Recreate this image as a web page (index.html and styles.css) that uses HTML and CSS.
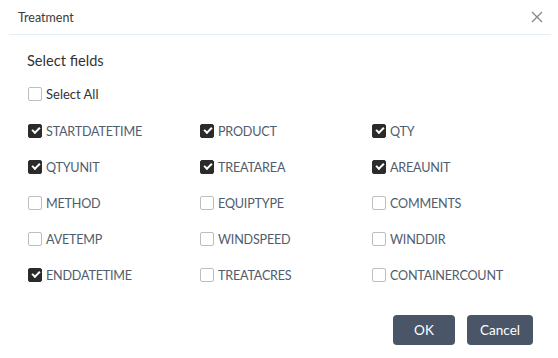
FILE: index.html
```html
<!DOCTYPE html>
<html lang="en">
<head>
  <meta charset="UTF-8" />
  <title>Treatment</title>
  <link rel="stylesheet" href="styles.css">
</head>
<body>
  <div class="dialog">
    <div class="dialog-header">
      <span class="dialog-title">Treatment</span>
      <button class="close-btn" aria-label="Close">
        <svg width="12" height="12" viewBox="0 0 12 12"><path d="M1 1L11 11M11 1L1 11" stroke="#8a8a8a" stroke-width="1.4" fill="none"/></svg>
      </button>
    </div>
    <div class="dialog-body">
      <div class="section-title">Select fields</div>
      <label class="field select-all"><span class="box"></span>Select All</label>
      <div class="field-grid">
        <label class="field"><span class="box checked"></span>STARTDATETIME</label>
        <label class="field"><span class="box checked"></span>PRODUCT</label>
        <label class="field"><span class="box checked"></span>QTY</label>
        <label class="field"><span class="box checked"></span>QTYUNIT</label>
        <label class="field"><span class="box checked"></span>TREATAREA</label>
        <label class="field"><span class="box checked"></span>AREAUNIT</label>
        <label class="field"><span class="box"></span>METHOD</label>
        <label class="field"><span class="box"></span>EQUIPTYPE</label>
        <label class="field"><span class="box"></span>COMMENTS</label>
        <label class="field"><span class="box"></span>AVETEMP</label>
        <label class="field"><span class="box"></span>WINDSPEED</label>
        <label class="field"><span class="box"></span>WINDDIR</label>
        <label class="field"><span class="box checked"></span>ENDDATETIME</label>
        <label class="field"><span class="box"></span>TREATACRES</label>
        <label class="field"><span class="box"></span>CONTAINERCOUNT</label>
      </div>
    </div>
    <div class="dialog-footer">
      <button class="btn">OK</button>
      <button class="btn">Cancel</button>
    </div>
  </div>
</body>
</html>
```

FILE: styles.css
```css
body {
  margin: 0;
  background: #fff;
  font-family: Lato, "Open Sans", sans-serif;
  color: #333;
}
.dialog {
  width: 558px;
  height: 358px;
  box-sizing: border-box;
}
.dialog-header {
  height: 34px;
  margin: 0 7px 0 9px;
  padding: 0 9px 0 9px;
  border-bottom: 1px solid #e4edf6;
  display: flex;
  align-items: center;
  justify-content: space-between;
}
.dialog-title {
  font-size: 12.5px;
  color: #3a3a3a;
}
.close-btn {
  background: none;
  border: none;
  padding: 0;
  width: 12px;
  height: 12px;
  margin-right: -1px;
  cursor: pointer;
  display: flex;
}
.dialog-body {
  padding: 16px 0 0 28px;
}
.section-title {
  font-size: 14.6px;
  line-height: 20px;
  color: #333;
  margin-left: -1px;
  margin-bottom: 5px;
}
.field {
  display: flex;
  align-items: center;
  height: 36px;
  font-size: 12.6px;
  letter-spacing: -0.2px;
  color: #515c6d;
  gap: 4px;
}
.select-all {
  font-size: 13px;
  letter-spacing: 0;
  color: #333;
}
.field-grid {
  display: grid;
  grid-template-columns: 172px 172px 172px;
  padding-top: 1px;
}
.box {
  width: 12px;
  height: 12px;
  border: 1px solid #bdbdbd;
  border-radius: 2px;
  background: #fff;
  position: relative;
  flex: none;
}
.box.checked {
  background: #2b2b2b;
  border-color: #2b2b2b;
}
.box.checked::after {
  content: "";
  position: absolute;
  left: 3px;
  top: 2px;
  width: 6px;
  height: 3px;
  border-left: 2px solid #fff;
  border-bottom: 2px solid #fff;
  transform: rotate(-45deg);
}
.dialog-footer {
  display: flex;
  justify-content: flex-end;
  gap: 12px;
  padding: 22px 25px 0 0;
}
.btn {
  height: 30px;
  border: none;
  border-radius: 4px;
  background: #4a5668;
  color: #fff;
  font-family: Lato, "Open Sans", sans-serif;
  font-size: 13.5px;
  padding: 0;
  width: 62px;
}
.btn + .btn {
  width: 66px;
}
```
